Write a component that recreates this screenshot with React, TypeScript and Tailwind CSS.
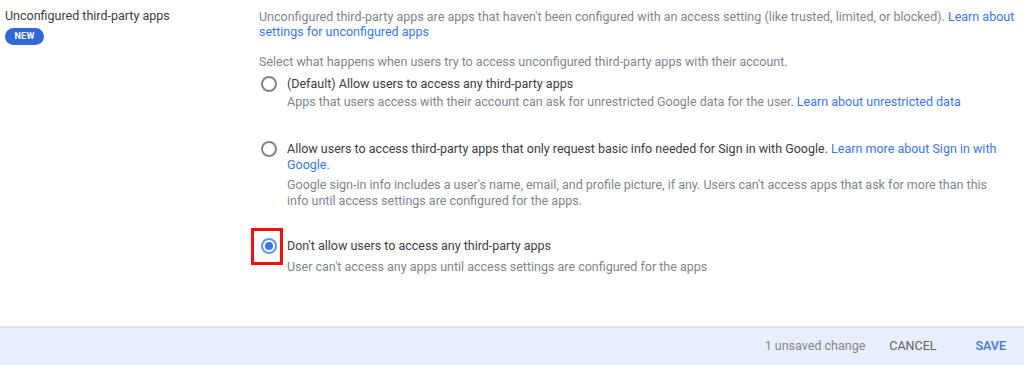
import React from "react";

function Radio({ checked }: { checked?: boolean }) {
  if (checked) {
    return (
      <span className="flex h-[16px] w-[16px] items-center justify-center rounded-full border-2 border-[#5e97f6]">
        <span className="h-[8px] w-[8px] rounded-full bg-[#3b78e7]" />
      </span>
    );
  }
  return <span className="block h-[16px] w-[16px] rounded-full border-2 border-[#80868b]" />;
}

export default function App() {
  return (
    <div
      className="flex h-[365px] w-[1024px] flex-col bg-white text-[12.5px]"
      style={{ fontFamily: "Roboto, 'Liberation Sans', sans-serif" }}
    >
      <div className="flex flex-1">
        <div className="w-[259px] shrink-0 pl-[5px] pt-[8px]">
          <div className="text-[12.5px] leading-[16px] text-[#3c4043]">Unconfigured third-party apps</div>
          <div className="mt-[4px] flex h-[17px] w-[39px] items-center justify-center rounded-full bg-[#3367d6] text-[9px] font-bold tracking-[0.3px] text-white">
            NEW
          </div>
        </div>
        <div className="flex-1 pr-[4px] pt-[8.5px]">
          <p className="leading-[15px] text-[#80868b]">
            Unconfigured third-party apps are apps that haven't been configured with an access setting (like trusted, limited, or blocked).{" "}
            <span className="text-[#3b78e7]">Learn about settings for unconfigured apps</span>
          </p>
          <p className="mt-[15px] leading-[15px] text-[#80868b]">
            Select what happens when users try to access unconfigured third-party apps with their account.
          </p>

          <div className="mt-[6px] flex">
            <div className="flex w-[28px] shrink-0 justify-start pl-[2px] pt-[1px]">
              <Radio />
            </div>
            <div>
              <div className="leading-[18px] text-[#3c4043]">(Default) Allow users to access any third-party apps</div>
              <div className="leading-[18px] text-[#80868b]">
                Apps that users access with their account can ask for unrestricted Google data for the user.{" "}
                <span className="text-[#3b78e7]">Learn about unrestricted data</span>
              </div>
            </div>
          </div>

          <div className="mt-[30px] flex">
            <div className="flex w-[28px] shrink-0 justify-start pl-[2px] pt-[0px]">
              <Radio />
            </div>
            <div className="w-[724px]">
              <div className="leading-[16px] text-[#3c4043]">
                Allow users to access third-party apps that only request basic info needed for Sign in with Google.{" "}
                <span className="text-[#3b78e7]">Learn more about Sign in with Google.</span>
              </div>
              <div className="mt-[4px] w-[712px] leading-[16px] text-[#80868b]">
                Google sign-in info includes a user's name, email, and profile picture, if any. Users can't access apps that ask for more than this info until access settings are configured for the apps.
              </div>
            </div>
          </div>

          <div className="mt-[29px] flex">
            <div className="relative flex w-[28px] shrink-0 justify-start pl-[2px] pt-[0px]">
              <Radio checked />
              <span className="pointer-events-none absolute left-[-8px] top-[-10px] h-[37px] w-[32px] border-[3px] border-[#ee1111]" />
            </div>
            <div>
              <div className="leading-[16px] text-[#3c4043]">Don't allow users to access any third-party apps</div>
              <div className="mt-[5px] leading-[16px] text-[#80868b]">
                User can't access any apps until access settings are configured for the apps
              </div>
            </div>
          </div>
        </div>
      </div>
      <div className="flex h-[39px] items-center justify-end border-t-2 border-[#dfe3eb] bg-[#e8eefb] pr-[18px] text-[12.5px]">
        <span className="text-[#80868b]">1 unsaved change</span>
        <span className="ml-[24px] text-[#5f6368]">CANCEL</span>
        <span className="ml-[39px] font-medium text-[#3b78e7]">SAVE</span>
      </div>
    </div>
  );
}
